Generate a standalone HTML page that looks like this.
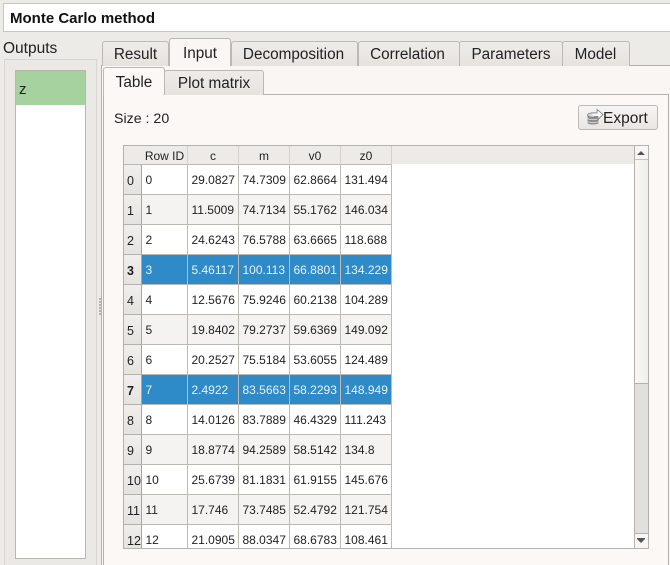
<!DOCTYPE html>
<html style="overflow:hidden;width:670px;height:565px"><head><meta charset="utf-8">
<style>
html,body{margin:0;padding:0}
body{width:670px;height:565px;position:relative;overflow:hidden;background:#edebe7;font-family:"Liberation Sans",sans-serif;color:#1f1f1f}
#w{position:absolute;left:0;top:0;width:670px;height:565px;overflow:hidden}
.a{position:absolute;box-sizing:border-box}
.tab{position:absolute;box-sizing:border-box;border:1px solid #bcb8b2;border-bottom:none;border-radius:3px 3px 0 0;background:linear-gradient(#eeecE9,#e6e3df);font-size:15.3px;text-align:center;white-space:nowrap;color:#222}
.on{background:#fbf8f5;z-index:3}
table{position:absolute;left:124px;top:146px;border-collapse:separate;border-spacing:0;table-layout:fixed;font-size:12px;z-index:2}
td,th{box-sizing:border-box;padding:0;font-weight:normal;border-right:1px solid #bdbab6;border-bottom:1px solid #bdbab6;overflow:hidden;white-space:nowrap}
th.h{height:19px;background:#edebe8;text-align:center;vertical-align:middle;padding-top:1px;border-right-color:#d4d2ce}
td{height:30px;background:#fff;padding:0 0 0 3.500px;vertical-align:middle;color:#222}
tr.z td{background:#f4f3f1}
tr.s td{background:#2e8bc7;color:#e8f2f9}
th.r{background:linear-gradient(#f1efec,#e5e3df);text-align:left;padding:3px 0 0 3px;font-size:12.5px;border-right-color:#a8a5a0;border-bottom-color:#b5b2ad}
tr.s th.r{font-weight:bold}
tr.l td{height:23px;padding-top:6px;border-bottom:none}
tr.l th.r{height:23px;padding-top:8px;border-bottom:none}
</style></head><body><div id="w">
<div class="a" style="left:3px;top:3px;width:667px;height:29px;background:#fff;border:1px solid #c9c6c1;border-right:none;font-weight:bold;font-size:15px;line-height:29px;padding-left:6px;color:#111">Monte Carlo method</div>

<div class="a" style="left:3px;top:40px;font-size:15.500px;color:#222">Outputs</div>
<div class="a" style="left:4px;top:59px;width:93px;height:520px;border:1px solid #d9d6d1;background:#ebe9e5"></div>
<div class="a" style="left:15px;top:70px;width:71px;height:489px;background:#fff;border:1px solid #b9b6b1"></div>
<div class="a" style="left:16px;top:71px;width:69px;height:34px;background:#a5d29f;font-size:15px;line-height:37px;padding-left:3px;color:#222">z</div>

<div class="a" style="left:99px;top:298px;width:2px;height:2px;background:#b5b2ad;box-shadow:0 3px #b5b2ad,0 6px #b5b2ad,0 9px #b5b2ad,0 12px #b5b2ad,0 15px #b5b2ad"></div>

<div class="a" style="left:101px;top:65px;width:580px;height:520px;border:1px solid #b5b2ad;background:#f9f6f3"></div>
<div class="tab" style="left:102px;top:41px;width:67px;height:25px;line-height:25px">Result</div>
<div class="tab on" style="left:169px;top:38px;width:62px;height:28px;line-height:29px;background:#f9f6f3">Input</div>
<div class="tab" style="left:231px;top:41px;width:127px;height:25px;line-height:25px;padding-right:2px">Decomposition</div>
<div class="tab" style="left:358px;top:41px;width:102px;height:25px;line-height:25px;padding-right:3px">Correlation</div>
<div class="tab" style="left:459px;top:41px;width:104px;height:25px;line-height:25px">Parameters</div>
<div class="tab" style="left:562px;top:41px;width:68px;height:25px;line-height:25px;padding-right:1px">Model</div>

<div class="a" style="left:103px;top:94px;width:566px;height:490px;border:1px solid #b5b2ad;background:#fbf8f5"></div>
<div class="tab on" style="left:103px;top:67px;width:62px;height:28px;line-height:29px;background:#fbf8f5">Table</div>
<div class="tab" style="left:164px;top:70px;width:100px;height:25px;line-height:25px">Plot matrix</div>

<div class="a" style="left:114px;top:111px;font-size:14.200px;color:#222">Size : 20</div>

<div class="a" style="left:578px;top:105px;width:80px;height:25px;border:1px solid #bdbab5;border-radius:3px;background:linear-gradient(#f7f5f3,#e9e6e2);font-size:15.500px;line-height:25px;padding-left:24px;color:#222;z-index:2">Export</div>
<svg class="a" style="left:586px;top:108px;z-index:3" width="18" height="18" viewBox="0 0 18 18">
<path d="M1.500 7h11v8c0 2-11 2-11 0z" fill="#8c8c8c"/>
<ellipse cx="7" cy="7" rx="5.500" ry="2.200" fill="#d6d6d6" stroke="#777" stroke-width=".7"/>
<path d="M1.500 10.500c2 1.500 9 1.500 11 0M1.500 13.500c2 1.500 9 1.500 11 0" stroke="#d8d8d8" fill="none"/>
<path d="M5 5h6V1.500L17 6.500l-5 5V8.500H8" fill="#fafafa" stroke="#777" stroke-width=".8"/>
</svg>

<div class="a" style="left:123px;top:145px;width:526px;height:404px;border:1px solid #b5b2ad;background:#fff"></div>
<div class="a" style="left:124px;top:146px;width:510px;height:18px;background:#edebe8"></div>
<table style="width:268px">
<colgroup><col style="width:18px"><col style="width:46px"><col style="width:51px"><col style="width:51px"><col style="width:51px"><col style="width:51px"></colgroup>
<tr><th class="h" style="border-right:none"></th><th class="h">Row ID</th><th class="h">c</th><th class="h">m</th><th class="h">v0</th><th class="h">z0</th></tr>
<tr><th class="r">0</th><td>0</td><td>29.0827</td><td>74.7309</td><td>62.8664</td><td>131.494</td></tr>
<tr class="z"><th class="r">1</th><td>1</td><td>11.5009</td><td>74.7134</td><td>55.1762</td><td>146.034</td></tr>
<tr><th class="r">2</th><td>2</td><td>24.6243</td><td>76.5788</td><td>63.6665</td><td>118.688</td></tr>
<tr class="s"><th class="r">3</th><td>3</td><td>5.46117</td><td>100.113</td><td>66.8801</td><td>134.229</td></tr>
<tr><th class="r">4</th><td>4</td><td>12.5676</td><td>75.9246</td><td>60.2138</td><td>104.289</td></tr>
<tr class="z"><th class="r">5</th><td>5</td><td>19.8402</td><td>79.2737</td><td>59.6369</td><td>149.092</td></tr>
<tr><th class="r">6</th><td>6</td><td>20.2527</td><td>75.5184</td><td>53.6055</td><td>124.489</td></tr>
<tr class="s"><th class="r">7</th><td>7</td><td>2.4922</td><td>83.5663</td><td>58.2293</td><td>148.949</td></tr>
<tr><th class="r">8</th><td>8</td><td>14.0126</td><td>83.7889</td><td>46.4329</td><td>111.243</td></tr>
<tr class="z"><th class="r">9</th><td>9</td><td>18.8774</td><td>94.2589</td><td>58.5142</td><td>134.8</td></tr>
<tr><th class="r">10</th><td>10</td><td>25.6739</td><td>81.1831</td><td>61.9155</td><td>145.676</td></tr>
<tr class="z"><th class="r">11</th><td>11</td><td>17.746</td><td>73.7485</td><td>52.4792</td><td>121.754</td></tr>
<tr class="l"><th class="r">12</th><td>12</td><td>21.0905</td><td>88.0347</td><td>68.6783</td><td>108.461</td></tr>
</table>

<div class="a" style="left:634px;top:146px;width:14px;height:402px;border-left:1px solid #b5b2ad;background:#f7f6f4;z-index:3"></div>
<div class="a" style="left:635px;top:159px;width:13px;height:225px;background:linear-gradient(90deg,#f8f7f5,#f1efec);border-top:1px solid #c5c2bd;border-bottom:1px solid #b5b2ad;z-index:3"></div>
<div class="a" style="left:635px;top:384px;width:13px;height:150px;background:#e2e0dc;border-bottom:1px solid #b5b2ad;z-index:3"></div>
<svg class="a" style="left:636px;top:149px;z-index:4" width="10" height="8"><path d="M1 6h8L5 2z" fill="#555"/></svg>
<svg class="a" style="left:636px;top:537px;z-index:4" width="10" height="8"><path d="M1 1h8v1L5 6 1 2z" fill="#555"/></svg>
</div></body></html>
